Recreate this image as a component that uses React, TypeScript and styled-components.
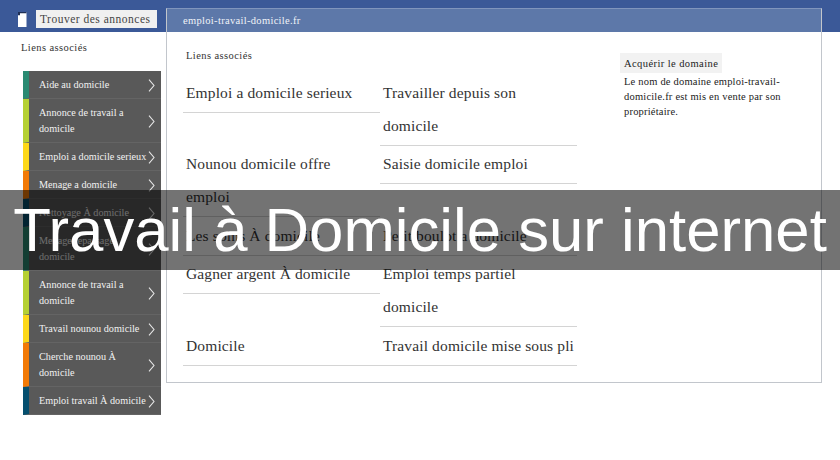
import React from "react";
import styled, { createGlobalStyle } from "styled-components";

type SideLink = { label: string; color: string };

const sideLinks: SideLink[] = [
  { label: "Aide au domicile", color: "#2a8a72" },
  { label: "Annonce de travail a domicile", color: "#b5d033" },
  { label: "Emploi a domicile serieux", color: "#fdd819" },
  { label: "Menage a domicile", color: "#f27a06" },
  { label: "Nettoyage À domicile", color: "#054f6e" },
  { label: "Menage repassage domicile", color: "#2a8a72" },
  { label: "Annonce de travail a domicile", color: "#b5d033" },
  { label: "Travail nounou domicile", color: "#fdd819" },
  { label: "Cherche nounou À domicile", color: "#f27a06" },
  { label: "Emploi travail À domicile", color: "#054f6e" },
];

const mainLinks = [
  "Emploi a domicile serieux",
  "Travailler depuis son domicile",
  "Nounou domicile offre emploi",
  "Saisie domicile emploi",
  "Les soins À domicile",
  "Petit boulot a domicile",
  "Gagner argent À domicile",
  "Emploi temps partiel domicile",
  "Domicile",
  "Travail domicile mise sous pli",
];

const GlobalStyle = createGlobalStyle`
  html, body {
    margin: 0;
    padding: 0;
    background: #fff;
  }
  body {
    font-family: "Liberation Serif", serif;
    color: #333;
  }
`;

const Page = styled.div`
  position: relative;
  width: 840px;
  height: 460px;
  overflow: hidden;
  display: flex;
  align-items: flex-start;
  background: linear-gradient(#3b5998 32px, #fff 32px);
`;

const LeftColumn = styled.div`
  width: 166px;
  flex: none;
`;

const Brand = styled.div`
  height: 32px;
  display: flex;
  align-items: center;
  padding: 6px 0 0 18px;
  box-sizing: border-box;
  gap: 9px;
`;

const SearchLabel = styled.div`
  width: 121px;
  height: 18px;
  flex: none;
  background: #f0f0f0;
  color: #444;
  font-size: 11.5px;
  line-height: 18px;
  letter-spacing: 0.5px;
  padding-left: 4px;
  box-sizing: border-box;
  white-space: nowrap;
`;

const SideTitle = styled.div`
  padding: 9px 0 0 21px;
  height: 38.5px;
  box-sizing: border-box;
  font-size: 10.5px;
  line-height: 13px;
  letter-spacing: 0.42px;
  color: #333;
`;

const SideList = styled.ul`
  list-style: none;
  margin: 0 5px 0 23px;
  padding: 0;
  background: #595959;
`;

const SideItem = styled.li<{ $color: string }>`
  display: flex;
  align-items: center;
  justify-content: space-between;
  box-sizing: border-box;
  padding: 6.5px 6px 4.5px 10px;
  border-left: 6px solid ${(p) => p.$color};
  border-bottom: 1px solid #646464;
  color: #f2f2f2;
  font-size: 10.2px;
  line-height: 16px;
`;

const SideLabel = styled.span`
  max-width: 109px;
`;

const Chevron = styled.svg`
  width: 7px;
  height: 13px;
  flex: none;
  fill: none;
  stroke: #e6e6e6;
  stroke-width: 1.1;
`;

const Panel = styled.main`
  width: 656px;
  height: 375px;
  margin-top: 8px;
  box-sizing: border-box;
  border: 1px solid #c2c6cc;
  border-top-color: #8095bd;
  background: #fff;
`;

const PanelHead = styled.div`
  height: 23px;
  background: #5d78a9;
  color: #f0f3f8;
  font-size: 10.5px;
  line-height: 23px;
  letter-spacing: 0.32px;
  padding-left: 16px;
`;

const PanelBody = styled.div`
  display: flex;
  align-items: flex-start;
  padding-left: 16px;
`;

const Links = styled.div`
  width: 395px;
  flex: none;
`;

const LinksTitle = styled.div`
  height: 43.5px;
  padding: 17px 0 0 3px;
  box-sizing: border-box;
  font-size: 10.5px;
  line-height: 13px;
  letter-spacing: 0.42px;
  color: #333;
`;

const LinkGrid = styled.div`
  display: grid;
  grid-template-columns: 197px 197px;
  align-items: start;
  row-gap: 1.5px;
`;

const LinkItem = styled.div`
  padding: 0 2.5px 3px 3px;
  border-bottom: 1px solid #d4d4d4;
  font-size: 15.5px;
  line-height: 33px;
  letter-spacing: 0.13px;
  color: #333;
`;

const Aside = styled.aside`
  width: 170px;
  margin: 21px 0 0 42px;
  font-size: 10.5px;
  line-height: 15px;
  color: #222;
`;

const AsideTitle = styled.div`
  display: inline-block;
  vertical-align: top;
  padding: 1px 4px 0;
  background: #f2f2f2;
  height: 20px;
  box-sizing: border-box;
  line-height: 19px;
  letter-spacing: 0.42px;
  color: #222;
`;

const AsideText = styled.p`
  margin: 1px 0 0;
  padding-left: 4px;
  letter-spacing: 0.2px;
`;

const Band = styled.div`
  position: absolute;
  left: 0;
  right: 0;
  top: 190px;
  height: 80px;
  background: rgba(0, 0, 0, 0.55);
  color: #fff;
  font-family: "Liberation Sans", Arial, sans-serif;
  font-size: 61.7px;
  line-height: 80px;
  text-align: center;
  white-space: nowrap;
`;

const Logo = () => (
  <svg width="9" height="15" viewBox="0 0 9 15">
    <path d="M0 0h8.5v15H0z" fill="#fff" />
    <path d="M0 0h8.5v1.2H2v2H0z" fill="#1e2f55" />
  </svg>
);

export default function App() {
  return (
    <>
      <GlobalStyle />
      <Page>
        <LeftColumn>
          <Brand>
            <Logo />
            <SearchLabel>Trouver des annonces</SearchLabel>
          </Brand>
          <SideTitle>Liens associés</SideTitle>
          <SideList>
            {sideLinks.map((link, i) => (
              <SideItem key={i} $color={link.color}>
                <SideLabel>{link.label}</SideLabel>
                <Chevron viewBox="0 0 7 13">
                  <path d="M1 .7 6 6.5l-5 5.8" />
                </Chevron>
              </SideItem>
            ))}
          </SideList>
        </LeftColumn>
        <Panel>
          <PanelHead>emploi-travail-domicile.fr</PanelHead>
          <PanelBody>
            <Links>
              <LinksTitle>Liens associés</LinksTitle>
              <LinkGrid>
                {mainLinks.map((text) => (
                  <LinkItem key={text}>{text}</LinkItem>
                ))}
              </LinkGrid>
            </Links>
            <Aside>
              <AsideTitle>Acquérir le domaine</AsideTitle>
              <AsideText>
                Le nom de domaine emploi-travail-domicile.fr est mis en vente par son propriétaire.
              </AsideText>
            </Aside>
          </PanelBody>
        </Panel>
        <Band>Travail à Domicile sur internet</Band>
      </Page>
    </>
  );
}
